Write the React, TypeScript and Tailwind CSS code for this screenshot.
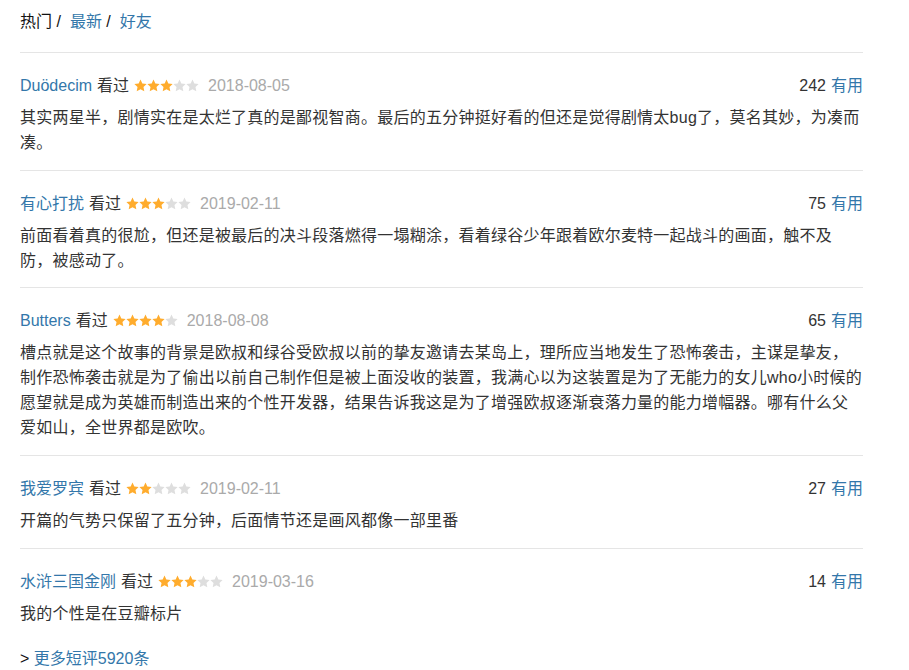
import React from 'react';

type Comment = {
  user: string;
  stars: number;
  date: string;
  votes: number;
  text: string;
};

const comments: Comment[] = [
  {
    user: 'Duödecim',
    stars: 3,
    date: '2018-08-05',
    votes: 242,
    text: '其实两星半，剧情实在是太烂了真的是鄙视智商。最后的五分钟挺好看的但还是觉得剧情太bug了，莫名其妙，为凑而凑。',
  },
  {
    user: '有心打扰',
    stars: 3,
    date: '2019-02-11',
    votes: 75,
    text: '前面看着真的很尬，但还是被最后的决斗段落燃得一塌糊涂，看着绿谷少年跟着欧尔麦特一起战斗的画面，触不及防，被感动了。',
  },
  {
    user: 'Butters',
    stars: 4,
    date: '2018-08-08',
    votes: 65,
    text: '槽点就是这个故事的背景是欧叔和绿谷受欧叔以前的挚友邀请去某岛上，理所应当地发生了恐怖袭击，主谋是挚友，制作恐怖袭击就是为了偷出以前自己制作但是被上面没收的装置，我满心以为这装置是为了无能力的女儿who小时候的愿望就是成为英雄而制造出来的个性开发器，结果告诉我这是为了增强欧叔逐渐衰落力量的能力增幅器。哪有什么父爱如山，全世界都是欧吹。',
  },
  {
    user: '我爱罗宾',
    stars: 2,
    date: '2019-02-11',
    votes: 27,
    text: '开篇的气势只保留了五分钟，后面情节还是画风都像一部里番',
  },
  {
    user: '水浒三国金刚',
    stars: 3,
    date: '2019-03-16',
    votes: 14,
    text: '我的个性是在豆瓣标片',
  },
];

const Star = ({ on }: { on: boolean }) => (
  <svg width="13" height="13" viewBox="0 0 24 24" className="block">
    <path
      d="M12 1l3.4 7.2 7.9 1-5.8 5.5 1.5 7.9L12 18.8l-7 3.8 1.5-7.9L0.7 9.2l7.9-1z"
      fill={on ? '#ffac2d' : '#dedede'}
    />
  </svg>
);

const Stars = ({ n }: { n: number }) => (
  <span className="inline-flex items-center ml-[5px]">
    {[0, 1, 2, 3, 4].map((i) => (
      <Star key={i} on={i < n} />
    ))}
  </span>
);

const App: React.FC = () => {
  return (
    <div
      className="min-h-screen bg-white text-[16px] text-[#333]"
      style={{ fontFamily: '"Liberation Sans", Arial, "Noto Sans CJK SC", sans-serif' }}
    >
      <div className="w-[843px] ml-5 pt-[9px]">
        {/* Tabs */}
        <div className="leading-[25px] mb-[18px] text-[#111]">
          <span>热门 /</span>
          <a className="ml-[9px] text-[#37a]">最新</a>
          <span> /</span>
          <a className="ml-[9px] text-[#37a]">好友</a>
        </div>

        {/* Comments */}
        {comments.map((c, idx) => (
          <div
            key={idx}
            className={`border-t border-[#e5e5e5] pt-5 ${idx === comments.length - 1 ? 'pb-[20px]' : 'pb-[14.7px]'}`}
          >
            <div className="flex items-center justify-between h-[25px] leading-[25px]">
              <div className="flex items-center">
                <a className="text-[#37a]">{c.user}</a>
                <span className="ml-[5px] text-[#333]">看过</span>
                <Stars n={c.stars} />
                <span className="ml-[9px] text-[#aaa]">{c.date}</span>
              </div>
              <div>
                <span className="text-[#333]">{c.votes}</span>
                <a className="ml-[5px] text-[#37a]">有用</a>
              </div>
            </div>
            <p className="mt-[7px] leading-[25px] tracking-[0.24px] text-[#333]">{c.text}</p>
          </div>
        ))}

        {/* More */}
        <div className="leading-[25px]">
          <span className="text-[#111]">&gt; </span>
          <a className="text-[#37a]">更多短评5920条</a>
        </div>
      </div>
    </div>
  );
};

export default App;
